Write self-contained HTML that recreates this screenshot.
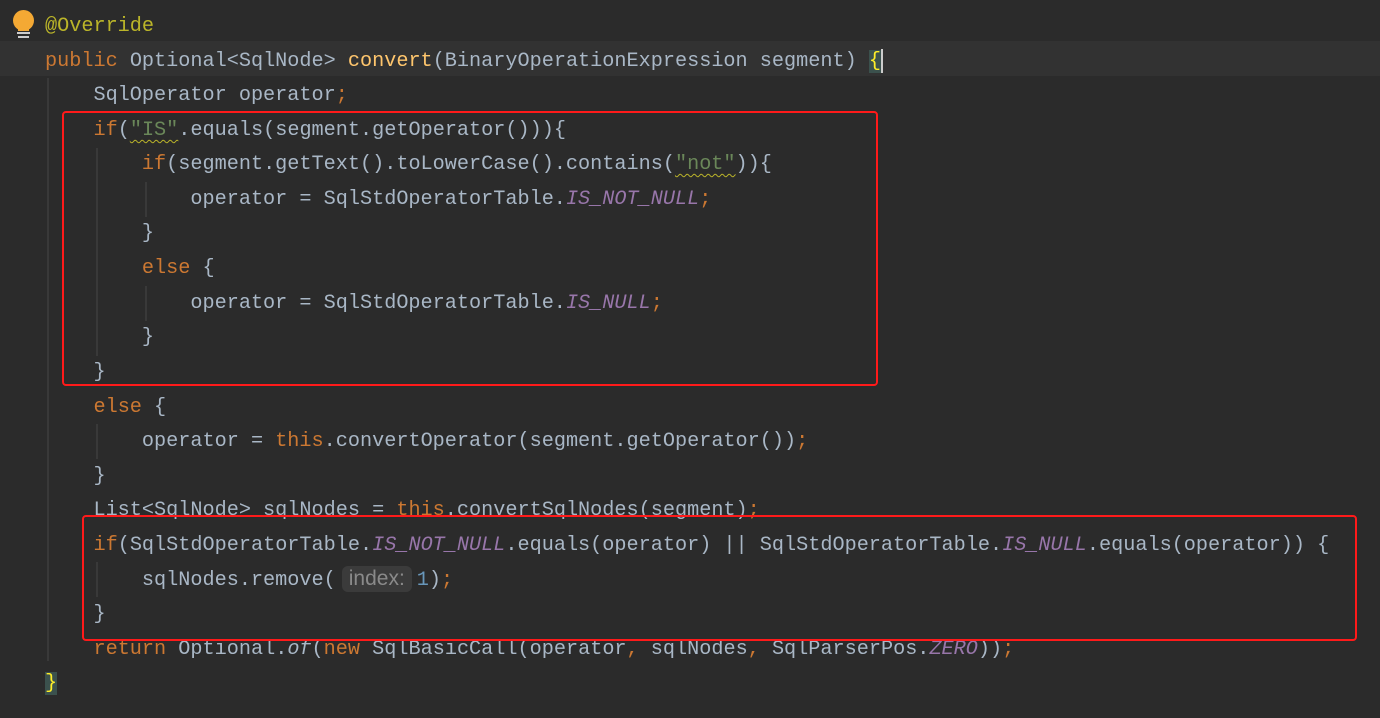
<!DOCTYPE html>
<html><head><meta charset="utf-8"><style>
body{margin:0;width:1380px;height:718px;background:#2b2b2b;overflow:hidden;position:relative;font-family:"Liberation Mono","DejaVu Sans Mono",monospace;font-size:20.2px;color:#a9b7c6}
.l{position:absolute;left:45px;white-space:pre;height:34.6px;line-height:34.6px;margin-top:2px}
.k{color:#cc7832}.a{color:#bbb529}.m{color:#ffc66d}.s{color:#6a8759}.st{color:#9876aa;font-style:italic}.n{color:#6897bb}
.cur{position:absolute;left:0;top:41px;width:1380px;height:35px;background:#323232}
.g{position:absolute;width:2px;background:#393939}
.box{position:absolute;border:2px solid #ff1a1a;border-radius:4px}
.hint{display:inline-block;line-height:26px;background:#3b3b3b;color:#8a8a8a;border-radius:6px;font-family:"Liberation Sans",sans-serif;font-size:21px;padding:0 7px;margin:0 5px 0 6px}
.w{text-decoration:underline wavy #bbb529 1px;text-underline-offset:4px}
.br{background:#3b514d;color:#ffef28}
</style></head><body>
<div class="cur"></div>
<div class="g" style="left:47px;top:78px;height:583px"></div>
<div class="g" style="left:96px;top:148px;height:208px"></div>
<div class="g" style="left:145px;top:182px;height:35px"></div>
<div class="g" style="left:145px;top:286px;height:35px"></div>
<div class="g" style="left:96px;top:424px;height:35px"></div>
<div class="g" style="left:96px;top:562px;height:35px"></div>
<div style="position:absolute;left:13px;top:10px;width:21px;height:21px;border-radius:50%;background:#f4a934"></div>
<div style="position:absolute;left:18px;top:26px;width:11px;height:5px;background:#f4a934"></div>
<div style="position:absolute;left:17px;top:32px;width:13px;height:2px;background:#ccc"></div>
<div style="position:absolute;left:18px;top:36px;width:11px;height:2px;background:#ccc"></div>
<div class="l" style="top:8px"><span class="a">@Override</span></div>
<div class="l" style="top:43px"><span class="k">public </span>Optional&lt;SqlNode&gt; <span class="m">convert</span>(BinaryOperationExpression segment) <span class="br">{</span><span style="display:inline-block;width:2px;height:24px;background:#ccc;vertical-align:middle"></span></div>
<div class="l" style="top:77px">    SqlOperator operator<span class="k">;</span></div>
<div class="l" style="top:112px">    <span class="k">if</span>(<span class="s w">"IS"</span>.equals(segment.getOperator())){</div>
<div class="l" style="top:146px">        <span class="k">if</span>(segment.getText().toLowerCase().contains(<span class="s w">"not"</span>)){</div>
<div class="l" style="top:181px">            operator = SqlStdOperatorTable.<span class="st">IS_NOT_NULL</span><span class="k">;</span></div>
<div class="l" style="top:215px">        }</div>
<div class="l" style="top:250px">        <span class="k">else </span>{</div>
<div class="l" style="top:285px">            operator = SqlStdOperatorTable.<span class="st">IS_NULL</span><span class="k">;</span></div>
<div class="l" style="top:319px">        }</div>
<div class="l" style="top:354px">    }</div>
<div class="l" style="top:389px">    <span class="k">else </span>{</div>
<div class="l" style="top:423px">        operator = <span class="k">this</span>.convertOperator(segment.getOperator())<span class="k">;</span></div>
<div class="l" style="top:458px">    }</div>
<div class="l" style="top:492px">    List&lt;SqlNode&gt; sqlNodes = <span class="k">this</span>.convertSqlNodes(segment)<span class="k">;</span></div>
<div class="l" style="top:527px">    <span class="k">if</span>(SqlStdOperatorTable.<span class="st">IS_NOT_NULL</span>.equals(operator) || SqlStdOperatorTable.<span class="st">IS_NULL</span>.equals(operator)) {</div>
<div class="l" style="top:562px">        sqlNodes.remove(<span class="hint">index:</span><span class="n">1</span>)<span class="k">;</span></div>
<div class="l" style="top:596px">    }</div>
<div class="l" style="top:631px">    <span class="k">return </span>Optional.<span style="font-style:italic">of</span>(<span class="k">new </span>SqlBasicCall(operator<span class="k">, </span>sqlNodes<span class="k">, </span>SqlParserPos.<span class="st">ZERO</span>))<span class="k">;</span></div>
<div class="l" style="top:665px"><span class="br">}</span></div>
<div class="box" style="left:62px;top:111px;width:812px;height:271px"></div>
<div class="box" style="left:82px;top:515px;width:1271px;height:122px"></div>
</body></html>
